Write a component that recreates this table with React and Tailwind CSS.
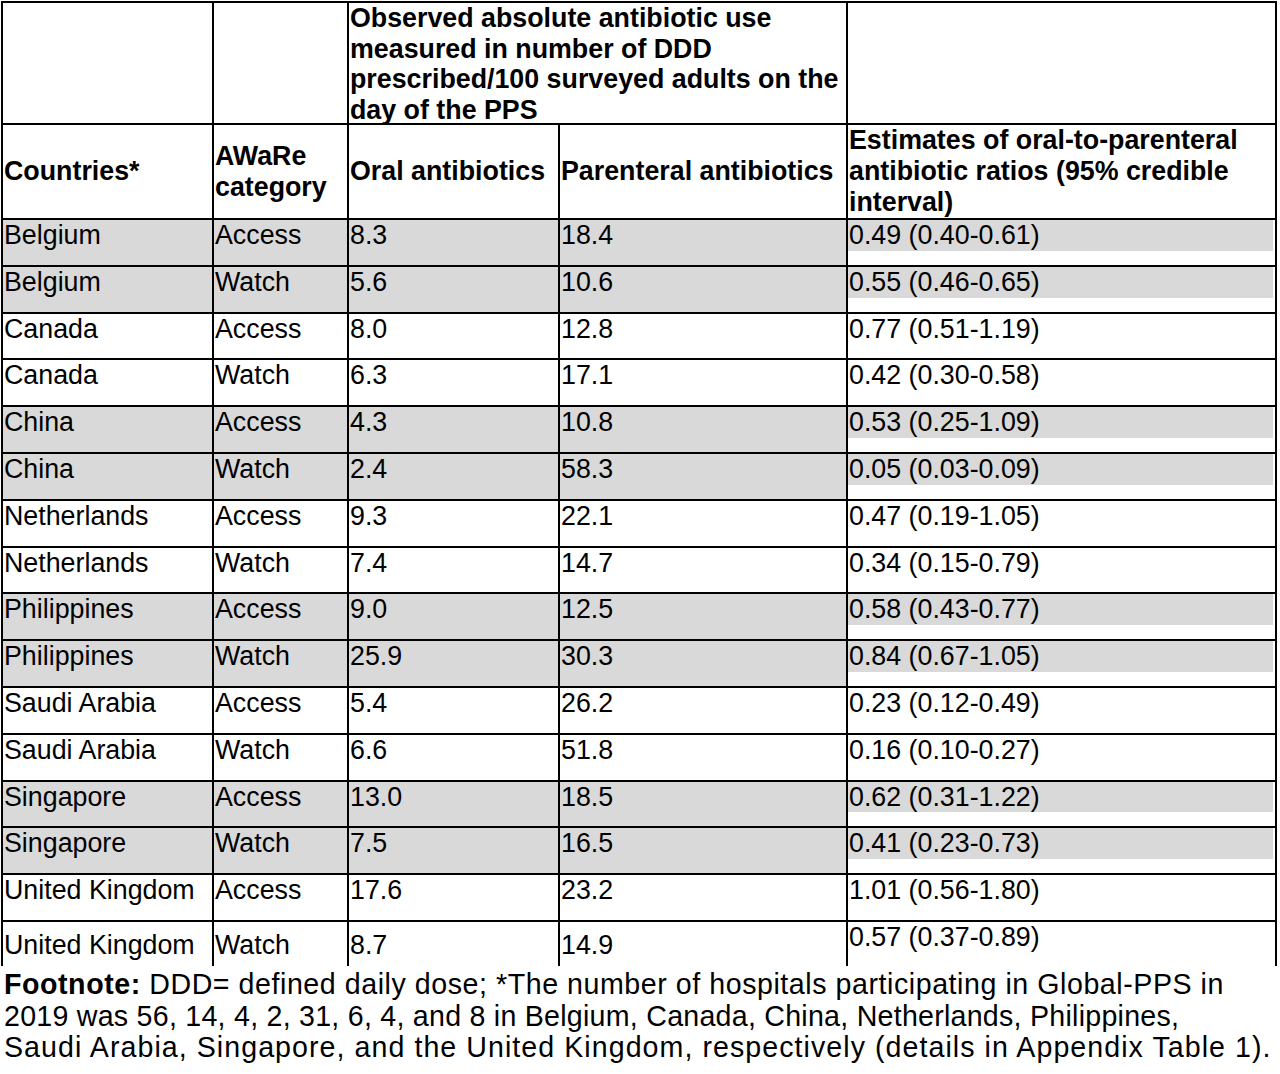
import React from "react";

const rows = [
  ["Belgium", "Access", "8.3", "18.4", "0.49 (0.40-0.61)", true],
  ["Belgium", "Watch", "5.6", "10.6", "0.55 (0.46-0.65)", true],
  ["Canada", "Access", "8.0", "12.8", "0.77 (0.51-1.19)", false],
  ["Canada", "Watch", "6.3", "17.1", "0.42 (0.30-0.58)", false],
  ["China", "Access", "4.3", "10.8", "0.53 (0.25-1.09)", true],
  ["China", "Watch", "2.4", "58.3", "0.05 (0.03-0.09)", true],
  ["Netherlands", "Access", "9.3", "22.1", "0.47 (0.19-1.05)", false],
  ["Netherlands", "Watch", "7.4", "14.7", "0.34 (0.15-0.79)", false],
  ["Philippines", "Access", "9.0", "12.5", "0.58 (0.43-0.77)", true],
  ["Philippines", "Watch", "25.9", "30.3", "0.84 (0.67-1.05)", true],
  ["Saudi Arabia", "Access", "5.4", "26.2", "0.23 (0.12-0.49)", false],
  ["Saudi Arabia", "Watch", "6.6", "51.8", "0.16 (0.10-0.27)", false],
  ["Singapore", "Access", "13.0", "18.5", "0.62 (0.31-1.22)", true],
  ["Singapore", "Watch", "7.5", "16.5", "0.41 (0.23-0.73)", true],
  ["United Kingdom", "Access", "17.6", "23.2", "1.01 (0.56-1.80)", false],
];

export default function App() {
  return (
    <div
      className="bg-white text-black w-[1280px] h-[1074px] overflow-hidden text-[26.8px] leading-[30.7px]"
      style={{ fontFamily: '"Liberation Sans", Arial, sans-serif' }}
    >
      <div className="ml-px mt-px w-[1276px] grid grid-cols-[209px_133px_209px_286px_427px] gap-[2px] bg-black pt-[2px] px-[2px]">
        {/* header row 1 */}
        <div className="bg-white h-[120px]"></div>
        <div className="bg-white h-[120px]"></div>
        <div className="bg-white h-[120px] col-span-2 font-bold pl-px leading-[30.5px] whitespace-nowrap">
          Observed absolute antibiotic use
          <br />
          measured in number of DDD
          <br />
          prescribed/100 surveyed adults on the
          <br />
          day of the PPS
        </div>
        <div className="bg-white h-[120px]"></div>

        {/* header row 2 */}
        <div className="bg-white h-[93px] font-bold pl-px flex items-center">Countries*</div>
        <div className="bg-white h-[93px] font-bold pl-px flex items-center">
          <span>
            AWaRe
            <br />
            category
          </span>
        </div>
        <div className="bg-white h-[93px] font-bold pl-px flex items-center whitespace-nowrap">
          Oral antibiotics
        </div>
        <div className="bg-white h-[93px] font-bold pl-px flex items-center whitespace-nowrap">
          Parenteral antibiotics
        </div>
        <div className="bg-white h-[93px] font-bold pl-px flex items-center whitespace-nowrap">
          <span>
            Estimates of oral-to-parenteral
            <br />
            antibiotic ratios (95% credible
            <br />
            interval)
          </span>
        </div>

        {rows.map((r, i) => (
          <React.Fragment key={i}>
            <div className={`h-[44.8px] pl-px whitespace-nowrap ${r[5] ? "bg-[#d9d9d9]" : "bg-white"}`}>{r[0]}</div>
            <div className={`h-[44.8px] pl-px ${r[5] ? "bg-[#d9d9d9]" : "bg-white"}`}>{r[1]}</div>
            <div className={`h-[44.8px] pl-px ${r[5] ? "bg-[#d9d9d9]" : "bg-white"}`}>{r[2]}</div>
            <div className={`h-[44.8px] pl-px ${r[5] ? "bg-[#d9d9d9]" : "bg-white"}`}>{r[3]}</div>
            <div className="h-[44.8px] bg-white">
              <div className={`pl-px mr-[2px] ${r[5] ? "bg-[#d9d9d9]" : "bg-white"}`}>{r[4]}</div>
            </div>
          </React.Fragment>
        ))}

        {/* last row */}
        <div className="h-[44px] bg-white pl-px pt-2 whitespace-nowrap">United Kingdom</div>
        <div className="h-[44px] bg-white pl-px pt-2">Watch</div>
        <div className="h-[44px] bg-white pl-px pt-2">8.7</div>
        <div className="h-[44px] bg-white pl-px pt-2">14.9</div>
        <div className="h-[44px] bg-white pl-px">0.57 (0.37-0.89)</div>
      </div>

      <div className="pl-[4px] pt-[3px] text-[28.6px] leading-[31.6px] whitespace-nowrap flex flex-col">
        <div className="tracking-[0.55px]">
          <span className="font-bold">Footnote:</span> DDD= defined daily dose; *The number of hospitals
          participating in Global-PPS in
        </div>
        <div className="tracking-[0.25px]">
          2019 was 56, 14, 4, 2, 31, 6, 4, and 8 in Belgium, Canada, China, Netherlands, Philippines,
        </div>
        <div className="tracking-[1.05px]">
          Saudi Arabia, Singapore, and the United Kingdom, respectively (details in Appendix Table 1).
        </div>
      </div>
    </div>
  );
}
